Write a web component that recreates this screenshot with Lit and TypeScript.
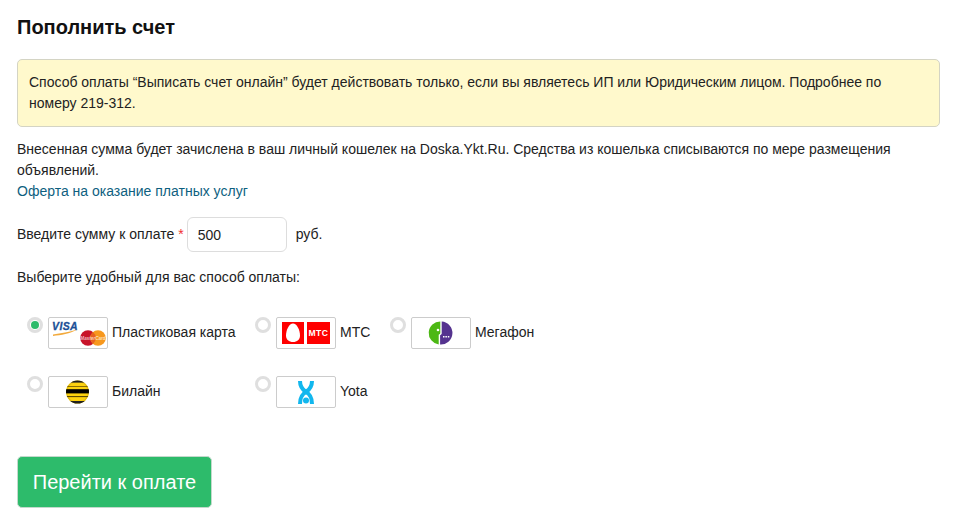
import { LitElement, html, css, svg } from 'lit'
import { customElement } from 'lit/decorators.js'

const visaLogo = svg`
  <text x="4" y="12.500" font-family="Liberation Sans, sans-serif" font-size="10.500" font-weight="700" font-style="italic" letter-spacing=".4" stroke="#1a4f96" stroke-width=".3" fill="#1a4f96">VISA</text>
  <path d="M5 17.500C13 16 21 15 29 12.500C22 17 13 18 5 19Z" fill="#f2a93b"/>
  <circle cx="40" cy="21" r="7.800" fill="#c8142a"/>
  <circle cx="50" cy="21" r="7.800" fill="#f7981d"/>
  <path d="M45 15a7.800 7.800 0 0 1 0 12a7.800 7.800 0 0 1 0-12Z" fill="#e8621f"/>
  <text x="45" y="22.700" text-anchor="middle" font-family="Liberation Sans, sans-serif" font-size="4.600" font-weight="700" font-style="italic" fill="#fff" fill-opacity=".7">MasterCard</text>
`

const mtsLogo = svg`
  <rect x="6" y="5" width="22" height="22" fill="#f00"/>
  <rect x="31" y="5" width="23" height="22" fill="#f00"/>
  <path d="M17 6.500C20.800 6.500 24 13 24 18.500C24 22.800 21 25 17 25C13 25 10 22.800 10 18.500C10 13 13.200 6.500 17 6.500Z" fill="#fff"/>
  <text x="42.500" y="19.300" text-anchor="middle" font-family="Liberation Sans, sans-serif" font-size="8.600" font-weight="700" letter-spacing=".5" fill="#fff">МТС</text>
`

const megafonLogo = svg`
  <path d="M29.300 4.500A11.500 11.500 0 0 0 27.700 27.400V18C27.700 17.500 29.300 17 29.300 16Z" fill="#4cb814"/>
  <path d="M30.700 4.500A11.500 11.500 0 0 1 29.100 27.500V18.500C29.100 18 30.700 17.500 30.700 16.500Z" fill="#55338f"/>
  <circle cx="27" cy="13" r="1.300" fill="#fff"/>
  <rect x="32" y="19" width="1.500" height="1.500" fill="#fff"/>
  <rect x="34.400" y="19" width="1.500" height="1.500" fill="#fff"/>
  <rect x="36.800" y="19" width="1.500" height="1.500" fill="#fff"/>
`

const beelineLogo = svg`
  <defs>
    <clipPath id="bee"><circle cx="29.500" cy="16" r="11.500"/></clipPath>
    <radialGradient id="beeShade" cx=".5" cy=".5" r=".55">
      <stop offset=".75" stop-color="#000" stop-opacity="0"/>
      <stop offset="1" stop-color="#000" stop-opacity=".25"/>
    </radialGradient>
  </defs>
  <g clip-path="url(#bee)">
    <rect x="18" y="4" width="23" height="24" fill="#fdd20e"/>
    <rect x="18" y="4" width="23" height="2.600" fill="#222"/>
    <rect x="18" y="10" width="23" height=".7" fill="#5a4600"/>
    <rect x="18" y="13.200" width="23" height="4.200" fill="#000"/>
    <rect x="18" y="20.200" width="23" height=".9" fill="#3a2c00"/>
    <rect x="18" y="25" width="23" height="3" fill="#222"/>
    <circle cx="29.500" cy="16" r="11.500" fill="url(#beeShade)"/>
  </g>
`

const yotaLogo = svg`
  <path d="M24 5C24 11 27 14 30 16C33 14 36 11 36 5" fill="none" stroke="#12b7ee" stroke-width="4"/>
  <path d="M24 28C24 21.500 26 18 30 16C34 18 36 21.500 36 28" fill="none" stroke="#12b7ee" stroke-width="4"/>
  <circle cx="30" cy="24.500" r="3" fill="#12b7ee"/>
`

const methods = [
  { name: 'Пластиковая карта', logo: visaLogo, checked: true },
  { name: 'МТС', logo: mtsLogo },
  { name: 'Мегафон', logo: megafonLogo },
  { name: 'Билайн', logo: beelineLogo },
  { name: 'Yota', logo: yotaLogo },
]

@customElement('app-root')
export class AppRoot extends LitElement {
  static override styles = css`
    :host {
      display: block;
      font-family: 'Liberation Sans', Arial, sans-serif;
      font-size: 14px;
      line-height: 21px;
      color: #222;
      background: #fff;
    }

    .page {
      padding: 16px 15px 17px 17px;
    }

    h1 {
      margin: 0;
      font-size: 20px;
      line-height: 22px;
      font-weight: 700;
      color: #111;
    }

    .alert {
      margin-top: 21px;
      padding: 12px 11px;
      background: #fff9cc;
      border: 1px solid #d4d4c4;
      border-radius: 5px;
    }

    .intro {
      margin: 12px 0 0;
    }

    a {
      color: #0e5f7f;
      text-decoration: none;
    }

    .amount {
      display: flex;
      align-items: center;
      margin-top: 15px;
    }

    .req {
      color: #f03030;
      margin-left: 4px;
    }

    input {
      box-sizing: border-box;
      width: 100px;
      height: 35px;
      margin: 0 9px 0 3px;
      padding: 0 10px;
      border: 1px solid #ddd;
      border-radius: 6px;
      font: inherit;
      color: #222;
      outline: none;
    }

    .hint {
      margin: 15px 0 0;
    }

    .methods {
      display: grid;
      grid-template-columns: 228px 135px auto;
      justify-content: start;
      row-gap: 27px;
      margin: 29px 0 0 10px;
    }

    .method {
      display: flex;
      align-items: flex-start;
      height: 32px;
    }

    .radio {
      box-sizing: border-box;
      width: 16px;
      height: 16px;
      margin: 0 5px 0 0;
      border: 3px solid #dfdfdf;
      border-radius: 50%;
      background: #fff;
      flex-shrink: 0;
      display: flex;
      align-items: center;
      justify-content: center;
    }

    .radio.on::after {
      content: '';
      width: 8px;
      height: 8px;
      border-radius: 50%;
      background: #2dbb6b;
    }

    .logo {
      box-sizing: border-box;
      width: 60px;
      height: 32px;
      border: 1px solid #ccc;
      border-radius: 2px;
      flex-shrink: 0;
    }

    .logo svg {
      display: block;
    }

    .name {
      margin-left: 4px;
      line-height: 30px;
      white-space: nowrap;
    }

    button {
      display: block;
      box-sizing: border-box;
      width: 195px;
      height: 52px;
      margin-top: 48px;
      padding: 0;
      background: #2dbb6b;
      border: 1px solid #c4d9cc;
      border-radius: 5px;
      font: inherit;
      font-size: 20px;
      color: #fff;
    }
  `

  override render() {
    return html`
      <div class="page">
        <h1>Пополнить счет</h1>
        <div class="alert">
          Способ оплаты “Выписать счет онлайн” будет действовать только, если вы являетесь ИП или
          Юридическим лицом. Подробнее по номеру 219-312.
        </div>
        <p class="intro">
          Внесенная сумма будет зачислена в ваш личный кошелек на Doska.Ykt.Ru. Средства из кошелька
          списываются по мере размещения объявлений.<br />
          <a href="#">Оферта на оказание платных услуг</a>
        </p>
        <div class="amount">
          <span>Введите сумму к оплате</span><span class="req">*</span>
          <input value="500" />
          <span>руб.</span>
        </div>
        <p class="hint">Выберите удобный для вас способ оплаты:</p>
        <div class="methods">
          ${methods.map(
            (m) => html`
              <div class="method">
                <span class="radio ${m.checked ? 'on' : ''}"></span>
                <span class="logo">
                  <svg width="58" height="30" viewBox="1 1 58 30">${m.logo}</svg>
                </span>
                <span class="name">${m.name}</span>
              </div>
            `
          )}
        </div>
        <button>Перейти к оплате</button>
      </div>
    `
  }
}
